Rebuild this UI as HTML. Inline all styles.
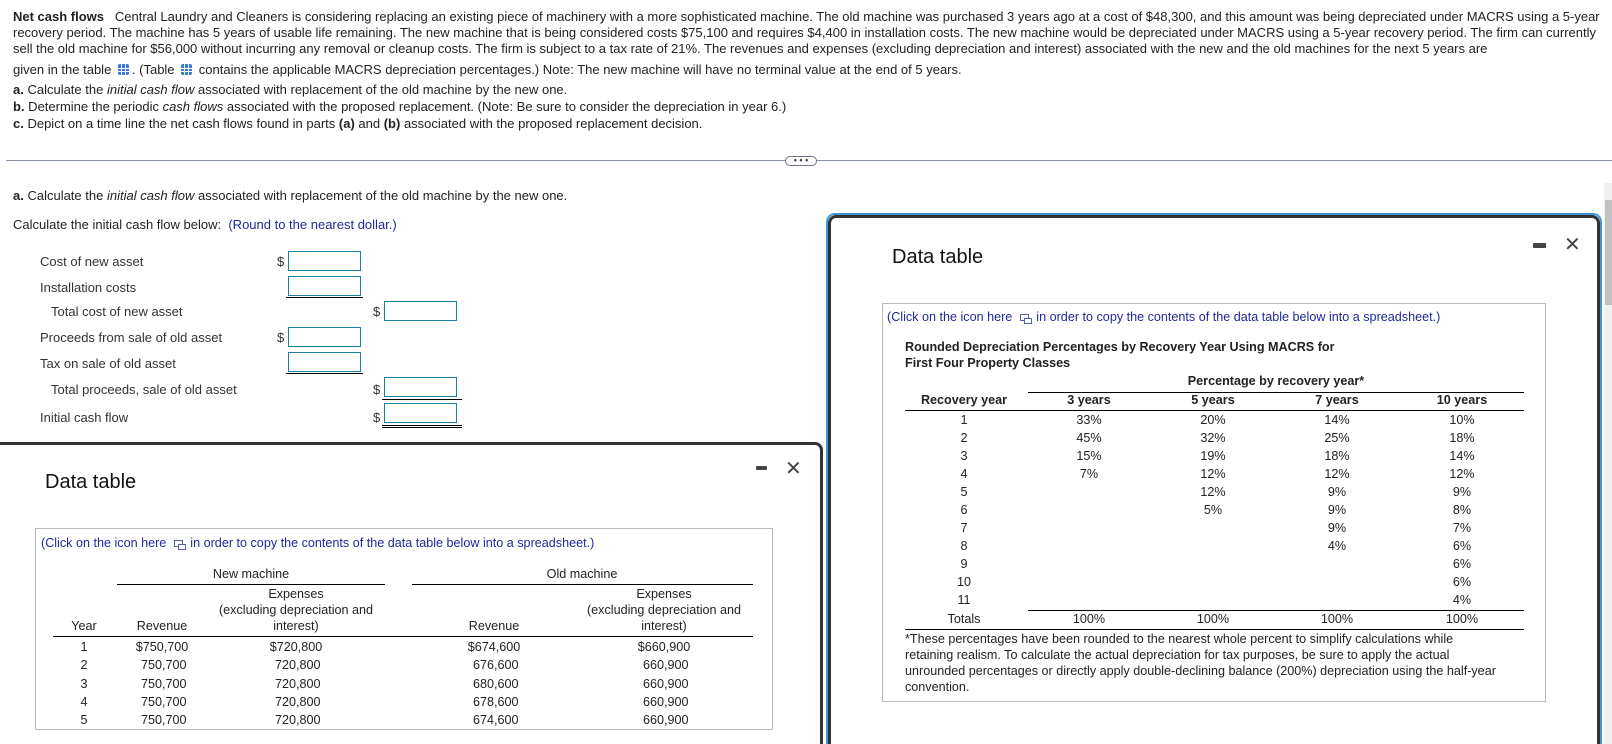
<!DOCTYPE html>
<html style="width:1612px;height:744px;overflow:hidden"><head><meta charset="utf-8">
<style>
*{margin:0;padding:0;box-sizing:border-box}
body{width:1612px;height:744px;overflow:hidden;background:#fff;font-family:"Liberation Sans",Arial,sans-serif;color:#222;position:relative}
.a{position:absolute;white-space:nowrap}
.p{font-size:13px;left:13px}
.blue{color:#1f2a9a}
.f{font-size:13px;color:#333}
.inp{position:absolute;width:73px;height:20px;border:1.5px solid #1a7fa0;background:#fff}
.ul{position:absolute;height:1px;background:#000}
.ic{display:inline-block;width:11px;height:11px;background:#3a7bd5;border-radius:2px;vertical-align:-1px;margin:0 3px;position:relative;
background-image:linear-gradient(#fff,#fff),linear-gradient(#fff,#fff),linear-gradient(#fff,#fff),linear-gradient(#fff,#fff);
background-size:1px 100%,1px 100%,100% 1px,100% 1px;background-position:3px 0,7px 0,0 4px,0 7px;background-repeat:no-repeat;background-color:#3a7bd5}
.t{font-size:12.6px;color:#222}
.c{position:absolute;white-space:nowrap;transform:translateX(-50%);text-align:center}
.cp{display:inline-block;width:9px;height:7px;border:1px solid #5560b0;margin:0 4px;vertical-align:0;position:relative}
.cp:after{content:"";position:absolute;left:3px;top:3px;width:6px;height:4px;border:1px solid #5560b0;background:#fff}
</style></head><body>

<div class="a p" style="top:9px"><b>Net cash flows</b>&nbsp;&nbsp; Central Laundry and Cleaners is considering replacing an existing piece of machinery with a more sophisticated machine. The old machine was purchased 3 years ago at a cost of $48,300, and this amount was being depreciated under MACRS using a 5-year</div>
<div class="a p" style="top:25px">recovery period. The machine has 5 years of usable life remaining. The new machine that is being considered costs $75,100 and requires $4,400 in installation costs. The new machine would be depreciated under MACRS using a 5-year recovery period. The firm can currently</div>
<div class="a p" style="top:41px">sell the old machine for $56,000 without incurring any removal or cleanup costs. The firm is subject to a tax rate of 21%. The revenues and expenses (excluding depreciation and interest) associated with the new and the old machines for the next 5 years are</div>
<div class="a p" style="top:62px">given in the table <span class="ic"></span>. (Table <span class="ic"></span> contains the applicable MACRS depreciation percentages.) Note: The new machine will have no terminal value at the end of 5 years.</div>
<div class="a p" style="top:82px"><b>a.</b> Calculate the <i>initial cash flow</i> associated with replacement of the old machine by the new one.</div>
<div class="a p" style="top:99px"><b>b.</b> Determine the periodic <i>cash flows</i> associated with the proposed replacement. (Note: Be sure to consider the depreciation in year 6.)</div>
<div class="a p" style="top:116px"><b>c.</b> Depict on a time line the net cash flows found in parts <b>(a)</b> and <b>(b)</b> associated with the proposed replacement decision.</div>

<div class="a" style="left:6px;top:160px;width:1606px;height:1px;background:#8a93a3"></div>
<div class="a" style="left:785px;top:156px;width:32px;height:10px;border:1px solid #6a7383;border-radius:6px;background:#fff;font-size:9px;line-height:6px;text-align:center;color:#444;font-weight:bold">• • •</div>

<div class="a p" style="top:188px"><b>a.</b> Calculate the <i>initial cash flow</i> associated with replacement of the old machine by the new one.</div>
<div class="a p" style="top:217px">Calculate the initial cash flow below: <span class="blue">&nbsp;(Round to the nearest dollar.)</span></div>

<div class="a f" style="left:40px;top:254px">Cost of new asset</div>
<div class="a f" style="left:40px;top:280px">Installation costs</div>
<div class="a f" style="left:51px;top:304px">Total cost of new asset</div>
<div class="a f" style="left:40px;top:330px">Proceeds from sale of old asset</div>
<div class="a f" style="left:40px;top:356px">Tax on sale of old asset</div>
<div class="a f" style="left:51px;top:382px">Total proceeds, sale of old asset</div>
<div class="a f" style="left:40px;top:410px">Initial cash flow</div>

<div class="a f" style="left:277px;top:254px">$</div><div class="inp" style="left:288px;top:251px"></div>
<div class="inp" style="left:288px;top:276px"></div><div class="ul" style="left:286px;top:297px;width:77px"></div>
<div class="a f" style="left:373px;top:304px">$</div><div class="inp" style="left:384px;top:301px"></div>
<div class="a f" style="left:277px;top:330px">$</div><div class="inp" style="left:288px;top:327px"></div>
<div class="inp" style="left:288px;top:352px"></div><div class="ul" style="left:286px;top:373px;width:77px"></div>
<div class="a f" style="left:373px;top:382px">$</div><div class="inp" style="left:384px;top:377px"></div><div class="ul" style="left:382px;top:399px;width:80px"></div>
<div class="a f" style="left:373px;top:410px">$</div><div class="inp" style="left:384px;top:403px"></div><div class="ul" style="left:382px;top:425px;width:80px"></div><div class="ul" style="left:382px;top:427px;width:80px"></div>

<!-- left modal -->
<div class="a" style="left:-10px;top:442px;width:833px;height:320px;border:3px solid #333;border-radius:0 8px 0 0;background:#fff"></div>
<div class="a" style="left:45px;top:471px;font-size:20px;color:#111">Data table</div>
<div class="a" style="left:756px;top:466px;width:11px;height:4px;background:#444;border-radius:1px"></div>
<div class="a" style="left:785px;top:456px;font-size:20px;color:#444">✕</div>
<div class="a" style="left:35px;top:528px;width:738px;height:202px;border:1px solid #bbb"></div>
<div class="a blue" style="left:41px;top:536px;font-size:12.6px">(Click on the icon here <span class="cp"></span> in order to copy the contents of the data table below into a spreadsheet.)</div>
<div class="t">
<div class="c" style="left:251px;top:567px">New machine</div>
<div class="c" style="left:582px;top:567px">Old machine</div>
<div class="ul" style="left:117px;top:584px;width:268px"></div>
<div class="ul" style="left:412px;top:584px;width:341px"></div>
<div class="c" style="left:296px;top:586px;line-height:16px">Expenses<br>(excluding depreciation and<br>interest)</div>
<div class="c" style="left:664px;top:586px;line-height:16px">Expenses<br>(excluding depreciation and<br>interest)</div>
<div class="c" style="left:84px;top:619px">Year</div>
<div class="c" style="left:162px;top:619px">Revenue</div>
<div class="c" style="left:494px;top:619px">Revenue</div>
<div class="ul" style="left:53px;top:636px;width:700px"></div>
<div class="c" style="left:84px;top:638px;line-height:18.3px">1<br>2<br>3<br>4<br>5</div>
<div class="c" style="left:162px;top:638px;line-height:18.3px">$750,700<br>&nbsp;750,700<br>&nbsp;750,700<br>&nbsp;750,700<br>&nbsp;750,700</div>
<div class="c" style="left:296px;top:638px;line-height:18.3px">$720,800<br>&nbsp;720,800<br>&nbsp;720,800<br>&nbsp;720,800<br>&nbsp;720,800</div>
<div class="c" style="left:494px;top:638px;line-height:18.3px">$674,600<br>&nbsp;676,600<br>&nbsp;680,600<br>&nbsp;678,600<br>&nbsp;674,600</div>
<div class="c" style="left:664px;top:638px;line-height:18.3px">$660,900<br>&nbsp;660,900<br>&nbsp;660,900<br>&nbsp;660,900<br>&nbsp;660,900</div>
</div>

<!-- right modal -->
<div class="a" style="left:826px;top:213px;width:776px;height:560px;border:2px solid #3b9ad6;border-radius:9px"></div>
<div class="a" style="left:828px;top:215px;width:772px;height:560px;border:3px solid #333;border-radius:8px;background:#fff"></div>
<div class="a" style="left:892px;top:246px;font-size:20px;color:#111">Data table</div>
<div class="a" style="left:1533px;top:243px;width:13px;height:5px;background:#444;border-radius:1px"></div>
<div class="a" style="left:1564px;top:232px;font-size:20px;color:#444">✕</div>
<div class="a" style="left:882px;top:303px;width:664px;height:399px;border:1px solid #bbb"></div>
<div class="a blue" style="left:887px;top:310px;font-size:12.6px">(Click on the icon here <span class="cp"></span> in order to copy the contents of the data table below into a spreadsheet.)</div>
<div class="t">
<div class="a" style="left:905px;top:339px;line-height:16px;font-weight:bold">Rounded Depreciation Percentages by Recovery Year Using MACRS for<br>First Four Property Classes</div>
<div class="c" style="left:1276px;top:374px;font-weight:bold">Percentage by recovery year*</div>
<div class="ul" style="left:1028px;top:392px;width:496px"></div>
<div class="c" style="left:964px;top:393px;font-weight:bold">Recovery year</div>
<div class="c" style="left:1089px;top:393px;font-weight:bold">3 years</div>
<div class="c" style="left:1213px;top:393px;font-weight:bold">5 years</div>
<div class="c" style="left:1337px;top:393px;font-weight:bold">7 years</div>
<div class="c" style="left:1462px;top:393px;font-weight:bold">10 years</div>
<div class="ul" style="left:905px;top:410px;width:619px"></div>
<div class="c" style="left:964px;top:411px;line-height:18px">1<br>2<br>3<br>4<br>5<br>6<br>7<br>8<br>9<br>10<br>11</div>
<div class="c" style="left:1089px;top:411px;line-height:18px">33%<br>45%<br>15%<br>7%</div>
<div class="c" style="left:1213px;top:411px;line-height:18px">20%<br>32%<br>19%<br>12%<br>12%<br>5%</div>
<div class="c" style="left:1337px;top:411px;line-height:18px">14%<br>25%<br>18%<br>12%<br>9%<br>9%<br>9%<br>4%</div>
<div class="c" style="left:1462px;top:411px;line-height:18px">10%<br>18%<br>14%<br>12%<br>9%<br>8%<br>7%<br>6%<br>6%<br>6%<br>4%</div>
<div class="ul" style="left:1028px;top:610px;width:496px"></div>
<div class="c" style="left:964px;top:612px">Totals</div>
<div class="c" style="left:1089px;top:612px">100%</div>
<div class="c" style="left:1213px;top:612px">100%</div>
<div class="c" style="left:1337px;top:612px">100%</div>
<div class="c" style="left:1462px;top:612px">100%</div>
<div class="ul" style="left:905px;top:629px;width:619px"></div>
<div class="a" style="left:905px;top:631px;line-height:16px">*These percentages have been rounded to the nearest whole percent to simplify calculations while<br>retaining realism. To calculate the actual depreciation for tax purposes, be sure to apply the actual<br>unrounded percentages or directly apply double-declining balance (200%) depreciation using the half-year<br>convention.</div>
</div>

<!-- scrollbar -->
<div class="a" style="left:1604px;top:183px;width:8px;height:561px;background:#f0f0f0"></div>
<div class="a" style="left:1605px;top:200px;width:7px;height:105px;background:#c1c1c1"></div>
</body></html>
